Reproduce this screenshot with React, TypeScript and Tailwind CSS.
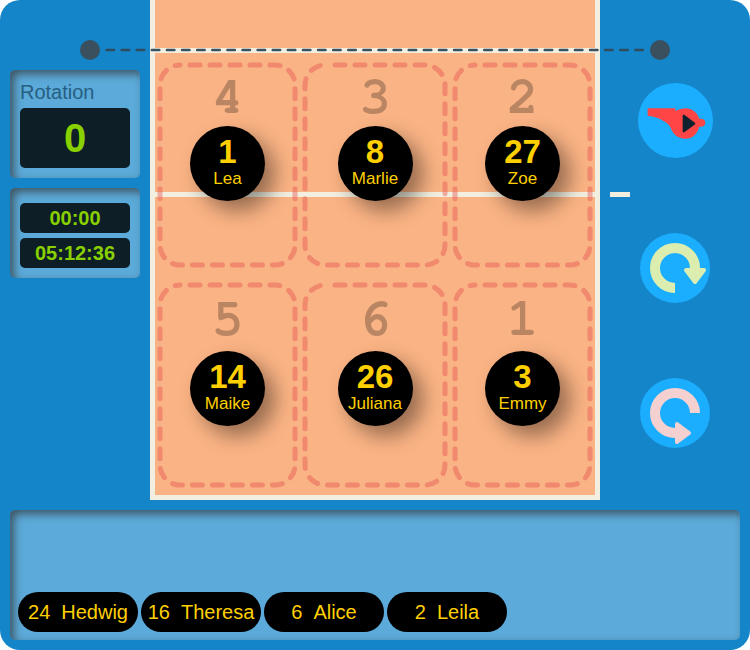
import React from 'react';

type Player = { number: number; name: string };
type Zone = { position: number; player: Player };

const frontRow: Zone[] = [
  { position: 4, player: { number: 1, name: 'Lea' } },
  { position: 3, player: { number: 8, name: 'Marlie' } },
  { position: 2, player: { number: 27, name: 'Zoe' } },
];

const backRow: Zone[] = [
  { position: 5, player: { number: 14, name: 'Maike' } },
  { position: 6, player: { number: 26, name: 'Juliana' } },
  { position: 1, player: { number: 3, name: 'Emmy' } },
];

const bench: Player[] = [
  { number: 24, name: 'Hedwig' },
  { number: 16, name: 'Theresa' },
  { number: 6, name: 'Alice' },
  { number: 2, name: 'Leila' },
];

const panel = 'rounded-[5px] bg-[#5baad9] shadow-[inset_4px_4px_8px_rgba(51,51,51,0.7)]';
const display = 'rounded-[5px] bg-[#0e1e26] text-center font-bold text-[#88d000]';

function CourtZone({ zone, labelHeight }: { zone: Zone; labelHeight: string }) {
  return (
    <div className="relative flex h-[200px] flex-col items-center">
      <svg className="absolute inset-0 h-full w-full overflow-visible" aria-hidden="true">
        <rect
          width="100%"
          height="100%"
          rx="20"
          fill="none"
          stroke="#e65050"
          strokeOpacity="0.43"
          strokeWidth="5"
          strokeLinecap="round"
          strokeDasharray="10 10"
          strokeDashoffset="10"
        />
      </svg>
      <span
        className={`pt-[3px] font-['FreeMono','Liberation_Mono',monospace] text-[52px] font-bold text-black opacity-25 ${labelHeight}`}
      >
        {zone.position}
      </span>
      <button
        type="button"
        className="relative flex size-[75px] flex-col items-center rounded-full bg-black pt-[7px] text-[#ffd000] shadow-[10px_10px_20px_rgba(0,0,0,0.4)]"
      >
        <span className="text-[33px] leading-[38px] font-bold">{zone.player.number}</span>
        <span className="text-[17px] leading-[16px]">{zone.player.name}</span>
      </button>
    </div>
  );
}

function WhistleIcon() {
  return (
    <svg viewBox="0 0 225 225" className="size-full" aria-hidden="true">
      <path
        d="M29 76 H112 V84 Q127 76 142 76 C163 76 178 89 184 107 Q202 106 202 119 Q202 132 184 131 C178 153 163 167 142 167 C120 166 105 154 98 134 Q92 121 75 113 Q51 99 29 99 Z"
        fill="#ff4545"
      />
      <path d="M137 98 L169 122 L137 145 Z" fill="#10222d" stroke="#10222d" strokeWidth="6" strokeLinejoin="round" />
    </svg>
  );
}

function RotateForwardIcon() {
  return (
    <svg viewBox="0 0 210 210" className="size-full" aria-hidden="true">
      <path d="M105 165 A60 60 0 1 1 165 105" fill="none" stroke="#dcedb0" strokeWidth="30" />
      <path d="M138 111 H192 L165 147 Z" fill="#dcedb0" stroke="#dcedb0" strokeWidth="12" strokeLinejoin="round" />
    </svg>
  );
}

function RotateBackIcon() {
  return (
    <svg viewBox="0 0 210 210" className="size-full" aria-hidden="true">
      <path d="M165 105 A60 60 0 1 0 105 165" fill="none" stroke="#f5d0d0" strokeWidth="30" />
      <path d="M111 138 L147 165 L111 192 Z" fill="#f5d0d0" stroke="#f5d0d0" strokeWidth="12" strokeLinejoin="round" />
    </svg>
  );
}

function Net() {
  return (
    <div className="absolute inset-x-20 top-10 flex items-center">
      <span className="size-5 rounded-full bg-[#3a505e]" />
      <svg className="h-5 flex-1" aria-hidden="true">
        <line
          x1="6.5"
          y1="10"
          x2="100%"
          y2="10"
          stroke="#304a58"
          strokeOpacity="0.95"
          strokeWidth="2.5"
          strokeLinecap="round"
          strokeDasharray="7.5 7.61"
        />
      </svg>
      <span className="size-5 rounded-full bg-[#3a505e]" />
    </div>
  );
}

export default function App() {
  return (
    <main className="flex flex-col rounded-[20px] bg-[#1485c8] pb-[10px] font-['Liberation_Sans',Arial,sans-serif]">
      <div className="relative flex">
        <aside className="flex w-[150px] flex-col gap-[10px] px-[10px] pt-[70px]">
          <section className={`${panel} p-[10px]`}>
            <h2 className="text-[20px] leading-6 text-[#265f82]">Rotation</h2>
            <output className={`${display} mt-1 block text-[40px] leading-[60px]`}>0</output>
          </section>
          <section className={`${panel} flex flex-col gap-[5px] px-[10px] pt-[15px] pb-[10px]`}>
            <time className={`${display} text-[20px] leading-[30px]`}>00:00</time>
            <time className={`${display} text-[20px] leading-[30px]`}>05:12:36</time>
          </section>
        </aside>

        <section className="relative flex flex-1 flex-col gap-5 border-x-[5px] border-b-[5px] border-[#f3efe0] bg-[#fab384] px-[5px] pt-[65px] pb-[10px]">
          <div className="absolute inset-x-0 top-12 h-[5px] bg-[#f3efe0]" />
          <div className="absolute inset-x-0 top-48 h-[5px] bg-[#f3efe0]" />
          <div className="grid grid-cols-[135fr_140fr_135fr] gap-[10px]">
            {frontRow.map((zone) => (
              <CourtZone key={zone.position} zone={zone} labelHeight="leading-[58px]" />
            ))}
          </div>
          <div className="grid grid-cols-[135fr_140fr_135fr] gap-[10px]">
            {backRow.map((zone) => (
              <CourtZone key={zone.position} zone={zone} labelHeight="leading-[63px]" />
            ))}
          </div>
        </section>

        <aside className="relative flex w-[150px] flex-col items-center gap-[75px] pt-[83px]">
          <div className="absolute top-48 left-[10px] h-[5px] w-5 bg-[#f3efe0]" />
          <button type="button" aria-label="Whistle" className="size-[75px] rounded-full bg-[#1baeff]">
            <WhistleIcon />
          </button>
          <button type="button" aria-label="Rotate forward" className="size-[70px] rounded-full bg-[#1baeff]">
            <RotateForwardIcon />
          </button>
          <button type="button" aria-label="Rotate back" className="size-[70px] rounded-full bg-[#1baeff]">
            <RotateBackIcon />
          </button>
        </aside>

        <Net />
      </div>

      <section className={`${panel} mx-[10px] mt-[10px] flex h-[130px] items-end gap-[3px] p-2`}>
        {bench.map((player) => (
          <button
            key={player.number}
            type="button"
            className="flex h-10 w-[120px] items-center justify-center gap-[11px] rounded-full bg-black text-[20px] text-[#ffd000]"
          >
            <span>{player.number}</span>
            <span>{player.name}</span>
          </button>
        ))}
      </section>
    </main>
  );
}
